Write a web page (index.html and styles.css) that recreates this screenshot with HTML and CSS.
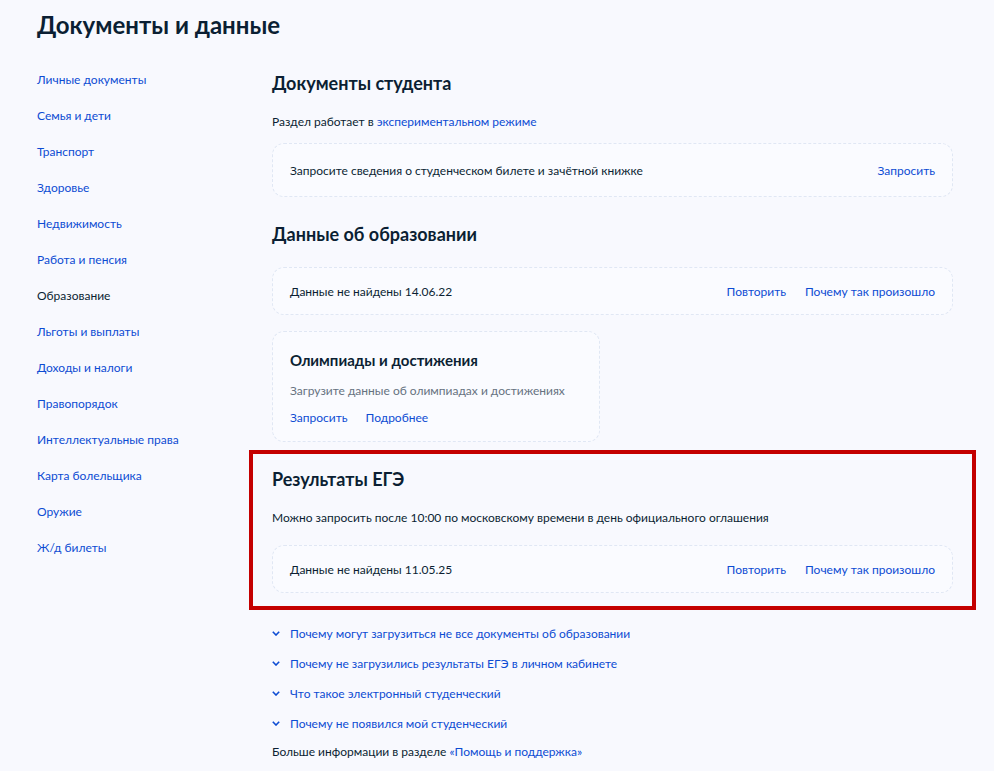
FILE: index.html
```html
<!DOCTYPE html>
<html lang="ru">
<head>
    <meta charset="UTF-8">
    <meta name="viewport" content="width=device-width, initial-scale=1.0">
    <title>Документы и данные</title>
    <link rel="stylesheet" href="styles.css">
</head>
<body>
    <h1 class="page-title">Документы и данные</h1>

    <div class="layout">
        <ul class="side-menu">
            <li><a href="#">Личные документы</a></li>
            <li><a href="#">Семья и дети</a></li>
            <li><a href="#">Транспорт</a></li>
            <li><a href="#">Здоровье</a></li>
            <li><a href="#">Недвижимость</a></li>
            <li><a href="#">Работа и пенсия</a></li>
            <li class="active">Образование</li>
            <li><a href="#">Льготы и выплаты</a></li>
            <li><a href="#">Доходы и налоги</a></li>
            <li><a href="#">Правопорядок</a></li>
            <li><a href="#">Интеллектуальные права</a></li>
            <li><a href="#">Карта болельщика</a></li>
            <li><a href="#">Оружие</a></li>
            <li><a href="#">Ж/д билеты</a></li>
        </ul>

        <main class="content">
            <h2 class="section-title">Документы студента</h2>
            <p class="note">Раздел работает в <a href="#">экспериментальном режиме</a></p>
            <div class="card row-card tall">
                <span>Запросите сведения о студенческом билете и зачётной книжке</span>
                <div class="actions"><a href="#">Запросить</a></div>
            </div>

            <h2 class="section-title">Данные об образовании</h2>
            <div class="card row-card first">
                <span>Данные не найдены 14.06.22</span>
                <div class="actions"><a href="#">Повторить</a><a href="#">Почему так произошло</a></div>
            </div>

            <div class="card tile">
                <h3>Олимпиады и достижения</h3>
                <p>Загрузите данные об олимпиадах и достижениях</p>
                <div class="actions"><a href="#">Запросить</a><a href="#">Подробнее</a></div>
            </div>

            <section class="highlight">
                <h2 class="section-title">Результаты ЕГЭ</h2>
                <p class="note">Можно запросить после 10:00 по московскому времени в день официального оглашения</p>
                <div class="card row-card">
                    <span>Данные не найдены 11.05.25</span>
                    <div class="actions"><a href="#">Повторить</a><a href="#">Почему так произошло</a></div>
                </div>
            </section>

            <ul class="faq">
                <li><svg viewBox="0 0 8 5" width="8" height="5"><path d="M0.8 0.8l3.2 3.2 3.2-3.2" fill="none" stroke="currentColor" stroke-width="1.6"/></svg><a href="#">Почему могут загрузиться не все документы об образовании</a></li>
                <li><svg viewBox="0 0 8 5" width="8" height="5"><path d="M0.8 0.8l3.2 3.2 3.2-3.2" fill="none" stroke="currentColor" stroke-width="1.6"/></svg><a href="#">Почему не загрузились результаты ЕГЭ в личном кабинете</a></li>
                <li><svg viewBox="0 0 8 5" width="8" height="5"><path d="M0.8 0.8l3.2 3.2 3.2-3.2" fill="none" stroke="currentColor" stroke-width="1.6"/></svg><a href="#">Что такое электронный студенческий</a></li>
                <li><svg viewBox="0 0 8 5" width="8" height="5"><path d="M0.8 0.8l3.2 3.2 3.2-3.2" fill="none" stroke="currentColor" stroke-width="1.6"/></svg><a href="#">Почему не появился мой студенческий</a></li>
            </ul>
            <p class="more">Больше информации в разделе <a href="#">«Помощь и поддержка»</a></p>
        </main>
    </div>
</body>
</html>
```

FILE: styles.css
```css
body { margin: 0; padding: 0 41px 0 37px; background-color: #f8f9fe; color: #0b1f33; font-family: Lato, "Noto Sans", sans-serif; font-size: 12px; }
a { color: #0d4cd3; text-decoration: none; }
p { margin: 0; }

.page-title { margin: 0; padding-top: 10px; font-size: 24px; line-height: 30px; font-weight: 700; }

.layout { display: grid; grid-template-columns: 235px 1fr; margin-top: 30px; }

.side-menu { list-style: none; margin: 0; padding: 0; }
.side-menu li { height: 36px; line-height: 20px; }
.side-menu li.active { color: #0b1f33; }

.content { min-width: 0; }
.section-title { margin: 0; font-size: 18px; line-height: 26px; font-weight: 700; }
.note { margin-top: 17px; line-height: 18px; }

.card { background-color: #fafbff; border: 1px dashed #e0e7f4; border-radius: 12px; }
.row-card { display: flex; justify-content: space-between; align-items: center; height: 48px; padding: 0 17px; box-sizing: border-box; margin-top: 18px; }
.row-card.tall { height: 54px; margin-top: 12px; margin-bottom: 24px; }
.row-card.first { margin-top: 20px; margin-bottom: 16px; }
.actions { display: flex; gap: 19px; }

.tile { width: 328px; box-sizing: border-box; padding: 16px 17px 14px; margin-bottom: 8px; }
.tile h3 { margin: 0; font-size: 15px; line-height: 24px; font-weight: 700; }
.tile p { margin-top: 10px; color: #66727f; line-height: 18px; }
.tile .actions { margin-top: 9px; line-height: 18px; gap: 18px; }

.highlight { margin: 0 -23px; padding: 12px 19px 13px; border: 4px solid #c40000; }

.faq { list-style: none; margin: 8px 0 0; padding: 0; }
.faq li { display: flex; align-items: center; height: 30px; color: #0d4cd3; }
.faq svg { margin: 0 10px 0 0; flex: none; }
.more { margin-top: 5px; line-height: 18px; }
```
